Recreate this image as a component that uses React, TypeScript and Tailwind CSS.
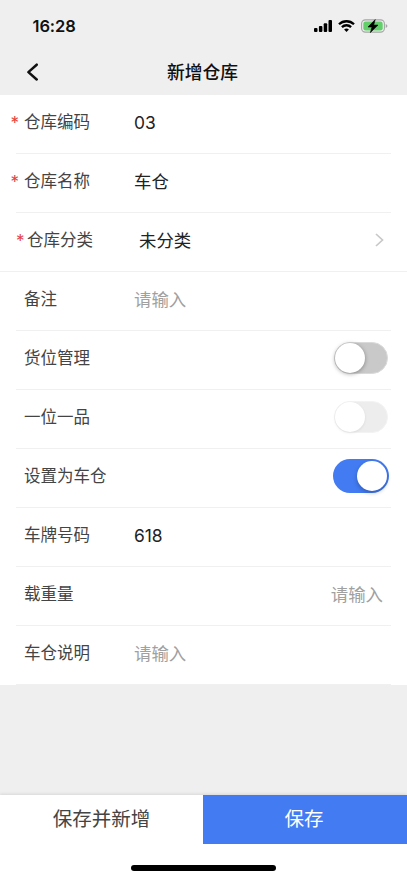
import { useState } from "react";
import type { ReactNode } from "react";

interface RowProps {
  label: string;
  required?: boolean;
  indent?: boolean;
  fullBorder?: boolean;
  children?: ReactNode;
}

function Row({ label, required, indent, fullBorder, children }: RowProps) {
  return (
    <div className={indent ? "h-[59px] pl-[5px]" : "h-[59px]"}>
      <div className="flex h-[58px] items-center">
        <div className="flex w-[134px] shrink-0 items-center pb-[4px] text-[16.5px] leading-6 text-[#444]">
          <span
            className={
              indent
                ? "w-[22px] pl-[11px] pt-[2px] text-[17px] text-[#e2443f]"
                : "w-[24px] pl-[10.5px] pt-[2px] text-[17px] text-[#e2443f]"
            }
          >
            {required ? "*" : ""}
          </span>
          <span className="whitespace-nowrap">{label}</span>
        </div>
        {children}
      </div>
      <div
        className={
          fullBorder
            ? "-ml-[5px] h-px bg-[#f0f0f0]"
            : "ml-4 mr-4 h-px bg-[#f0f0f0]"
        }
      />
    </div>
  );
}

function Value({ children }: { children: ReactNode }) {
  return (
    <span className="pb-[3px] text-[17.4px] leading-6 text-[#222]">
      {children}
    </span>
  );
}

function Placeholder({ right }: { right?: boolean }) {
  return (
    <span
      className={
        right
          ? "ml-auto mr-[24px] pb-[3px] text-[17.4px] leading-6 text-[#a0a0a0]"
          : "pb-[2px] text-[17.4px] leading-6 text-[#a0a0a0]"
      }
    >
      请输入
    </span>
  );
}

interface SwitchProps {
  checked: boolean;
  disabled?: boolean;
  onChange?: () => void;
}

function Switch({ checked, disabled, onChange }: SwitchProps) {
  if (checked) {
    return (
      <button
        onClick={onChange}
        className="mb-[4px] ml-auto mr-[18px] flex h-[34px] w-[56px] items-center justify-end rounded-full bg-[#427bf2] pr-[2px]"
      >
        <span className="h-[30px] w-[30px] rounded-full bg-white shadow-[0_2px_4px_rgba(0,0,0,0.25)]" />
      </button>
    );
  }
  return (
    <button
      onClick={onChange}
      disabled={disabled}
      className={
        disabled
          ? "mb-[4px] ml-auto mr-[19px] flex h-[32px] w-[54px] items-center rounded-full border border-[#f3f3f3] bg-[#ededed]"
          : "mb-[4px] ml-auto mr-[19px] flex h-[32px] w-[54px] items-center rounded-full border border-[#dadada] bg-[#c9c9c9]"
      }
    >
      <span
        className={
          disabled
            ? "h-[30px] w-[30px] rounded-full bg-white shadow-[0_1px_3px_rgba(0,0,0,0.08)]"
            : "h-[30px] w-[30px] rounded-full bg-white shadow-[0_1px_4px_rgba(0,0,0,0.35)]"
        }
      />
    </button>
  );
}

function StatusBar() {
  return (
    <div className="flex h-[50px] items-center justify-between pl-[32.5px] pr-[19px] pt-[2px]">
      <span className="text-[16.5px] font-semibold leading-5 tracking-[-0.1px] text-[#111]">
        16:28
      </span>
      <div className="flex items-center">
        <svg width="18" height="12" viewBox="0 0 18 12" fill="#000">
          <rect x="0" y="8" width="3.5" height="4" rx="1" />
          <rect x="4.9" y="6" width="3.5" height="6" rx="1" />
          <rect x="9.7" y="3.2" width="3.5" height="8.8" rx="1" />
          <rect x="14.5" y="0" width="3.5" height="12" rx="1" />
        </svg>
        <svg
          className="ml-[6px]"
          width="17"
          height="12"
          viewBox="0 0 17 12"
          fill="none"
          stroke="#000"
          strokeWidth="2.3"
        >
          <path d="M1 4.3C5.2 0.2 11.8 0.2 16 4.3" />
          <path d="M3.9 7.1C6.5 4.6 10.5 4.6 13.1 7.1" />
          <path d="M8.5 11.9L6.1 9.4C7.5 8.3 9.5 8.3 10.9 9.4Z" fill="#000" stroke="none" />
        </svg>
        <svg
          className="ml-[6px]"
          width="27"
          height="14"
          viewBox="0 0 27 14"
          fill="none"
        >
          <rect x="0.6" y="0.9" width="22.8" height="12.2" rx="3.8" stroke="#a5a5a5" strokeWidth="1.1" />
          <rect x="2.3" y="2.5" width="19.4" height="9" rx="2.3" fill="#62cf6b" />
          <path d="M24.7 5v4c1.2-.5 1.7-1.2 1.7-2s-.5-1.5-1.7-2z" fill="#a5a5a5" />
          <path
            d="M14.2 0.6L7 8h4l-1.6 5.6L17 6.1h-4.3z"
            fill="#000"
            stroke="#000"
            strokeWidth="0.6"
            strokeLinejoin="round"
          />
        </svg>
      </div>
    </div>
  );
}

export default function App() {
  const [locationManaged, setLocationManaged] = useState(false);
  const [isCarWarehouse, setIsCarWarehouse] = useState(true);

  return (
    <div className="flex h-[880px] w-full flex-col bg-[#efefef] font-[Inter,'Noto_Sans_CJK_SC',sans-serif]">
      <StatusBar />

      {/* Nav bar */}
      <div className="grid h-[45px] grid-cols-[1fr_auto_1fr] items-center">
        <button className="mb-[2px] ml-[26px] w-fit">
          <svg
            width="13"
            height="18"
            viewBox="0 0 13 18"
            fill="none"
            stroke="#111"
            strokeWidth="2.5"
            strokeLinecap="round"
            strokeLinejoin="round"
          >
            <path d="M10.7 1.7L2.4 9.1l8.3 7.4" />
          </svg>
        </button>
        <h1 className="pr-[2px] text-[17.8px] font-medium leading-6 text-[#111]">新增仓库</h1>
      </div>

      {/* Form */}
      <div className="bg-white">
        <Row label="仓库编码" required>
          <Value>03</Value>
        </Row>
        <Row label="仓库名称" required>
          <Value>车仓</Value>
        </Row>
        <Row label="仓库分类" required indent fullBorder>
          <Value>未分类</Value>
          <svg
            className="mb-[4px] ml-auto mr-[23px]"
            width="9"
            height="14"
            viewBox="0 0 9 14"
            fill="none"
            stroke="#c8c8c8"
            strokeWidth="1.7"
          >
            <path d="M1 1l6.5 6L1 13" />
          </svg>
        </Row>
        <Row label="备注">
          <Placeholder />
        </Row>
        <Row label="货位管理">
          <Switch
            checked={locationManaged}
            onChange={() => setLocationManaged(!locationManaged)}
          />
        </Row>
        <Row label="一位一品">
          <Switch checked={false} disabled />
        </Row>
        <Row label="设置为车仓">
          <Switch
            checked={isCarWarehouse}
            onChange={() => setIsCarWarehouse(!isCarWarehouse)}
          />
        </Row>
        <Row label="车牌号码">
          <Value>618</Value>
        </Row>
        <Row label="载重量">
          <Placeholder right />
        </Row>
        <Row label="车仓说明">
          <Placeholder />
        </Row>
      </div>

      {/* Footer */}
      <div className="mt-auto h-[85px] bg-white shadow-[0_-1px_3px_rgba(0,0,0,0.1)]">
        <div className="flex h-[49px] text-[19.5px]">
          <button className="w-[203px] pt-px text-[#444]">保存并新增</button>
          <button className="flex-1 bg-[#427bf2] pr-[2px] pt-px text-white">保存</button>
        </div>
        <div className="ml-[131px] mt-[21px] h-[6px] w-[145px] rounded-full bg-black" />
      </div>
    </div>
  );
}
